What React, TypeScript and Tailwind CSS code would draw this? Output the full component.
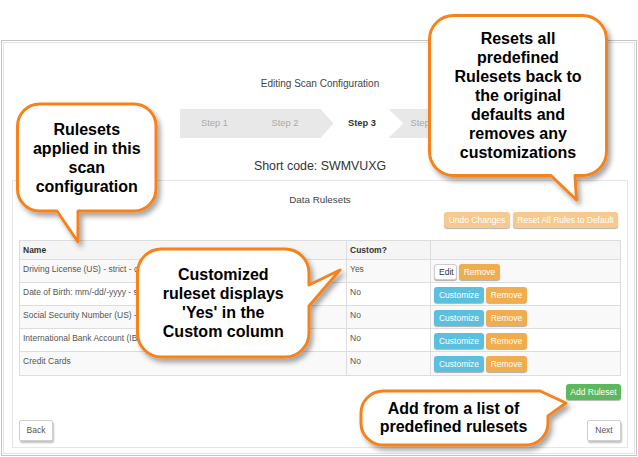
type Rule = { name: string; custom: boolean };

const rules: Rule[] = [
  { name: "Driving License (US) - strict - custom", custom: true },
  { name: "Date of Birth: mm/-dd/-yyyy - strict", custom: false },
  { name: "Social Security Number (US) - strict", custom: false },
  { name: "International Bank Account (IBAN)", custom: false },
  { name: "Credit Cards", custom: false },
];

function Btn({ children, className }: { children: React.ReactNode; className: string }) {
  return (
    <button
      className={`h-[16px] rounded-[3px] px-[4px] text-[8.5px] leading-none shadow-[0_1px_1px_rgba(0,0,0,0.3)] ${className}`}
    >
      {children}
    </button>
  );
}

function PlainBtn({ children }: { children: React.ReactNode }) {
  return (
    <button className="h-[21px] w-[34px] rounded-[2px] border border-[#cfcfcf] bg-white text-[8.5px] text-[#555] shadow-[1px_2px_2px_rgba(0,0,0,0.25)]">
      {children}
    </button>
  );
}

function Stepper() {
  return (
    <div className="mx-auto mt-[19px] flex h-[29px] w-[281px] bg-[#e8e8e8] text-[9.3px] font-normal text-[#aaa]">
      <div className="flex w-[70px] items-center justify-center">Step 1</div>
      <div className="flex w-[71px] items-center justify-center">Step 2</div>
      <div className="flex w-[83px] items-center justify-center bg-white pr-[13px] font-bold text-[#333] [clip-path:polygon(0_0,68px_0,83px_50%,68px_100%,0_100%,13px_50%)]">
        <span className="pl-[13px]">Step 3</span>
      </div>
      <div className="flex w-[57px] items-center justify-start pl-[7px]">Step 4</div>
    </div>
  );
}

function RulesTable() {
  return (
    <div className="mx-[6px] mt-[12px] border border-[#dddddd] text-[8.5px]">
      <div className="flex h-[19px] border-b border-[#dddddd] bg-[#f5f5f5] font-bold text-[#333]">
        <div className="flex w-[326px] items-center pl-[3px]">Name</div>
        <div className="flex w-[84px] items-center border-l border-[#dddddd] pl-[3px]">Custom?</div>
        <div className="flex-1 border-l border-[#dddddd]"></div>
      </div>
      {rules.map((r, i) => (
        <div
          key={r.name}
          className={`flex h-[23px] text-[#555] ${i < rules.length - 1 ? "border-b border-[#dddddd]" : ""} ${i % 2 === 0 ? "bg-[#f9f9f9]" : "bg-white"}`}
        >
          <div className="w-[326px] overflow-hidden whitespace-nowrap pl-[3px] pt-[4px] leading-[11px]">{r.name}</div>
          <div className="w-[84px] border-l border-[#dddddd] pl-[3px] pt-[4px] leading-[11px]">
            {r.custom ? "Yes" : "No"}
          </div>
          <div className="flex flex-1 gap-[2px] border-l border-[#dddddd] pl-[3px] pt-[4px]">
            {r.custom ? (
              <Btn className="w-[23px] border border-[#cccccc] bg-white text-[#333]">Edit</Btn>
            ) : (
              <Btn className="w-[50px] bg-[#5bc0de] text-white">Customize</Btn>
            )}
            <Btn className="w-[41px] bg-[#f0ad4e] text-white">Remove</Btn>
          </div>
        </div>
      ))}
    </div>
  );
}

function Callouts() {
  const boxes = [
    { l: 17.5, t: 104, w: 138.5, h: 107, lh: "leading-[19px]", text: ["Rulesets", "applied in this", "scan", "configuration"] },
    {
      l: 429.5,
      t: 15.5,
      w: 177,
      h: 160,
      lh: "leading-[19px]",
      text: ["Resets all", "predefined", "Rulesets back to", "the original", "defaults and", "removes any", "customizations"],
    },
    { l: 137.5, t: 249, w: 171.5, h: 108, lh: "leading-[19px]", text: ["Customized", "ruleset displays", "'Yes' in the", "Custom column"] },
    { l: 361, t: 391, w: 185, h: 54, lh: "leading-[18px]", text: ["Add from a list of", "predefined rulesets"] },
  ];
  return (
    <>
      <svg className="pointer-events-none absolute left-0 top-0" width="638" height="457" viewBox="0 0 638 457">
        <defs>
          <filter id="sh" x="-20%" y="-20%" width="140%" height="140%">
            <feDropShadow dx="3" dy="4" stdDeviation="2.5" floodColor="#000" floodOpacity="0.35" />
          </filter>
        </defs>
        <g fill="#fff" stroke="#f7821b" strokeWidth="3" strokeLinejoin="round" filter="url(#sh)">
          <path d="M39.5,104 H134 A22,22 0 0 1 156,126 V189 A22,22 0 0 1 134,211 H78 L78,242 L57,211 H39.5 A22,22 0 0 1 17.5,189 V126 A22,22 0 0 1 39.5,104 Z" />
          <path d="M453.5,15.5 H582.5 A24,24 0 0 1 606.5,39.5 V151.5 A24,24 0 0 1 582.5,175.5 H575 L576.5,200 L551,175.5 H453.5 A24,24 0 0 1 429.5,151.5 V39.5 A24,24 0 0 1 453.5,15.5 Z" />
          <path d="M161.5,249 H285 A24,24 0 0 1 309,273 V285 L340,270 L309,306 V333 A24,24 0 0 1 285,357 H161.5 A24,24 0 0 1 137.5,333 V273 A24,24 0 0 1 161.5,249 Z" />
          <path d="M383,391 H540 L566,403 L548,416 V423 A22,22 0 0 1 526,445 H383 A22,22 0 0 1 361,423 V413 A22,22 0 0 1 383,391 Z" />
        </g>
      </svg>
      {boxes.map((c) => (
        <div
          key={c.text[0]}
          className={`absolute flex flex-col items-center justify-center text-center text-[16px] font-bold text-black ${c.lh}`}
          style={{ left: c.l, top: c.t, width: c.w, height: c.h }}
        >
          {c.text.map((t) => (
            <span key={t} className="whitespace-nowrap">
              {t}
            </span>
          ))}
        </div>
      ))}
    </>
  );
}

export default function App() {
  return (
    <div className="relative h-[457px] w-[638px] overflow-hidden bg-white font-['Liberation_Sans',Arial,sans-serif]">
      <div className="pl-[1px] pt-[40px]">
        <div className="h-[416px] w-[636px] border border-[#c4c4c4] p-[1px]">
          <div className="flex h-full flex-col border border-[#e3e3e3] pb-[5px] pl-[8px] pr-[6px]">
            <p className="mt-[34px] text-center text-[10px] leading-[13px] text-[#444]">Editing Scan Configuration</p>
            <Stepper />
            <p className="mt-[20px] text-center text-[12.4px] leading-[17px] text-[#333]">Short code: SWMVUXG</p>
            <div className="mt-[5px] flex flex-1 flex-col border border-[#e6e6e6]">
              <p className="pt-[12px] text-center text-[9.8px] leading-[13px] text-[#444]">Data Rulesets</p>
              <div className="mr-[9px] mt-[6px] flex justify-end gap-[3px]">
                <Btn className="w-[66px] bg-[#f6c98f] text-white">Undo Changes</Btn>
                <Btn className="w-[105px] bg-[#f6c98f] text-white">Reset All Rules to Default</Btn>
              </div>
              <RulesTable />
              <div className="mr-[6px] mt-[8px] flex justify-end">
                <Btn className="w-[55px] bg-[#5cb85c] text-white">Add Ruleset</Btn>
              </div>
              <div className="mx-[6px] mt-[20px] flex justify-between">
                <PlainBtn>Back</PlainBtn>
                <PlainBtn>Next</PlainBtn>
              </div>
            </div>
          </div>
        </div>
      </div>
      <Callouts />
    </div>
  );
}
